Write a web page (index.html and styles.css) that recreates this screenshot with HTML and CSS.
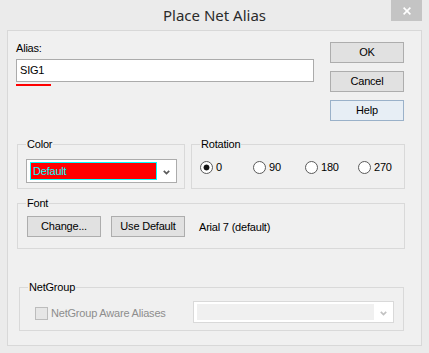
FILE: index.html
```html
<!DOCTYPE html>
<html>
<head>
<meta charset="utf-8">
<title>Place Net Alias</title>
<link rel="stylesheet" href="styles.css">
</head>
<body>
<div class="window">
  <div class="titlebar">
    <div></div>
    <div class="title">Place Net Alias</div>
    <div class="close"><svg width="8" height="8" viewBox="0 0 8 8"><path d="M0.6 0.6 L7.4 7.4 M7.4 0.6 L0.6 7.4" stroke="#ffffff" stroke-width="1.6" fill="none"/></svg></div>
  </div>
  <div class="client">
    <div class="top">
      <div class="alias">
        <div class="lbl">Alias:</div>
        <div class="textbox">SIG1</div>
        <div class="underline"></div>
      </div>
      <div class="buttons">
        <div class="btn">OK</div>
        <div class="btn">Cancel</div>
        <div class="btn hot">Help</div>
      </div>
    </div>

    <div class="row2">
      <fieldset class="grp grp-color">
        <legend>Color</legend>
        <div class="combo color-combo">
          <div class="swatch">Default</div>
          <div class="arrow"><svg width="7" height="5" viewBox="0 0 7 5"><path d="M0.8 0.8 L3.5 3.6 L6.2 0.8" stroke="#5a5a5a" stroke-width="1.7" fill="none"/></svg></div>
        </div>
      </fieldset>
      <fieldset class="grp grp-rot">
        <legend>Rotation</legend>
        <div class="radios">
          <div class="ritem"><span class="radio on"></span><span class="rtxt">0</span></div>
          <div class="ritem"><span class="radio"></span><span class="rtxt">90</span></div>
          <div class="ritem"><span class="radio"></span><span class="rtxt">180</span></div>
          <div class="ritem"><span class="radio"></span><span class="rtxt">270</span></div>
        </div>
      </fieldset>
    </div>

    <fieldset class="grp grp-font">
      <legend>Font</legend>
      <div class="fontrow">
        <div class="btn">Change...</div>
        <div class="btn">Use Default</div>
        <div class="fontname">Arial 7 (default)</div>
      </div>
    </fieldset>

    <fieldset class="grp grp-net">
      <legend>NetGroup</legend>
      <div class="netrow">
        <span class="check"></span>
        <span class="disabled-txt">NetGroup Aware Aliases</span>
        <div class="combo dis">
          <div class="dis-inner"></div>
          <div class="arrow"><svg width="7" height="5" viewBox="0 0 7 5"><path d="M0.8 0.8 L3.5 3.6 L6.2 0.8" stroke="#c2c2c2" stroke-width="1.7" fill="none"/></svg></div>
        </div>
      </div>
    </fieldset>
  </div>
</div>
</body>
</html>
```

FILE: styles.css
```css
html, body {
  margin: 0;
  padding: 0;
}
body {
  background: #ebebeb;
  font-family: "Liberation Sans", Arial, sans-serif;
  font-size: 11px;
  letter-spacing: -0.2px;
  color: #000;
}
.window {
  width: 429px;
  height: 353px;
  background: #ebebeb;
  display: flex;
  flex-direction: column;
}
.titlebar {
  height: 30px;
  padding: 0 7px;
  display: grid;
  grid-template-columns: 1fr auto 1fr;
}
.title {
  font-family: "Noto Sans", "Open Sans", sans-serif;
  font-size: 15px;
  letter-spacing: 0;
  line-height: 30px;
  color: #2b2b2b;
}
.close {
  justify-self: end;
  width: 31px;
  height: 21px;
  background: #c4c4c4;
  display: flex;
  align-items: center;
  justify-content: center;
}
.client {
  margin: 0 7px;
  height: 316px;
  box-sizing: border-box;
  border: 1px solid #d8d8d8;
  background: #f0f0f0;
}
.top {
  display: flex;
  padding: 11px 0 0 8px;
}
.alias {
  width: 298px;
}
.lbl {
  line-height: 13px;
  margin-bottom: 4px;
}
.textbox {
  height: 23px;
  box-sizing: border-box;
  border: 1px solid #ababab;
  background: #fff;
  padding-left: 3px;
  line-height: 21px;
}
.underline {
  margin-top: 2px;
  width: 35px;
  height: 2px;
  background: #ff0000;
}
.buttons {
  margin-left: 16px;
  display: flex;
  flex-direction: column;
  gap: 8px;
}
.btn {
  width: 74px;
  height: 21px;
  box-sizing: border-box;
  border: 1px solid #adadad;
  background: #e1e1e1;
  text-align: center;
  line-height: 19px;
}
.btn.hot {
  border-color: #9ab1c9;
  background: #e7eef5;
}
.grp {
  margin: 0;
  padding: 0;
  border: 1px solid #d9d9d9;
  min-width: 0;
  box-sizing: border-box;
}
.grp legend {
  margin-left: 8px;
  padding: 0 1px;
  line-height: 13px;
}
.row2 {
  display: flex;
  margin-top: 17px;
  padding-left: 9px;
}
.grp-color {
  width: 168px;
  padding-top: 8px;
  padding-bottom: 5px;
}
.combo {
  height: 24px;
  box-sizing: border-box;
  border: 1px solid #acacac;
  background: #fff;
  padding: 2px 0 2px 3px;
  display: flex;
}
.color-combo {
  margin-left: 8px;
  width: 151px;
}
.swatch {
  width: 127px;
  height: 18px;
  box-sizing: border-box;
  border: 1px solid #00ffff;
  background: #ff0000;
  color: #00ffff;
  padding-left: 2px;
  line-height: 16px;
}
.arrow {
  flex: 1;
  display: flex;
  align-items: center;
  justify-content: center;
  padding-top: 2px;
}
.grp-rot {
  margin-left: 6px;
  width: 214px;
  padding-top: 10px;
}
.radios {
  margin-left: 8px;
  display: grid;
  grid-template-columns: 53px 52px 53px auto;
}
.ritem {
  display: flex;
  align-items: center;
  height: 13px;
}
.radio {
  width: 13px;
  height: 13px;
  box-sizing: border-box;
  border: 1px solid #5a5a5a;
  border-radius: 50%;
  background: #fff;
}
.radio.on {
  background: radial-gradient(circle, #151515 0 2.6px, #ffffff 3.3px);
}
.rtxt {
  margin-left: 3px;
  line-height: 13px;
}
.grp-font {
  margin: 8px 0 0 9px;
  width: 388px;
  padding-top: 6px;
  padding-bottom: 11px;
}
.fontrow {
  margin-left: 9px;
  display: flex;
  align-items: center;
  gap: 10px;
}
.fontname {
  margin-left: 4px;
}
.grp-net {
  margin: 32px 0 0 11px;
  width: 385px;
  padding-top: 7px;
  padding-bottom: 7px;
}
.netrow {
  margin: 0 9px 0 15px;
  display: flex;
  align-items: center;
}
.check {
  width: 13px;
  height: 13px;
  box-sizing: border-box;
  border: 1px solid #bcbcbc;
  background: #e6e6e6;
  margin-top: 2px;
}
.disabled-txt {
  margin-left: 3px;
  color: #8d8d8d;
  margin-top: 2px;
}
.combo.dis {
  margin-left: auto;
  width: 201px;
  height: 22px;
  border-color: #d9d9d9;
}
.dis-inner {
  width: 177px;
  height: 16px;
  background: #f0f0f0;
}
```
